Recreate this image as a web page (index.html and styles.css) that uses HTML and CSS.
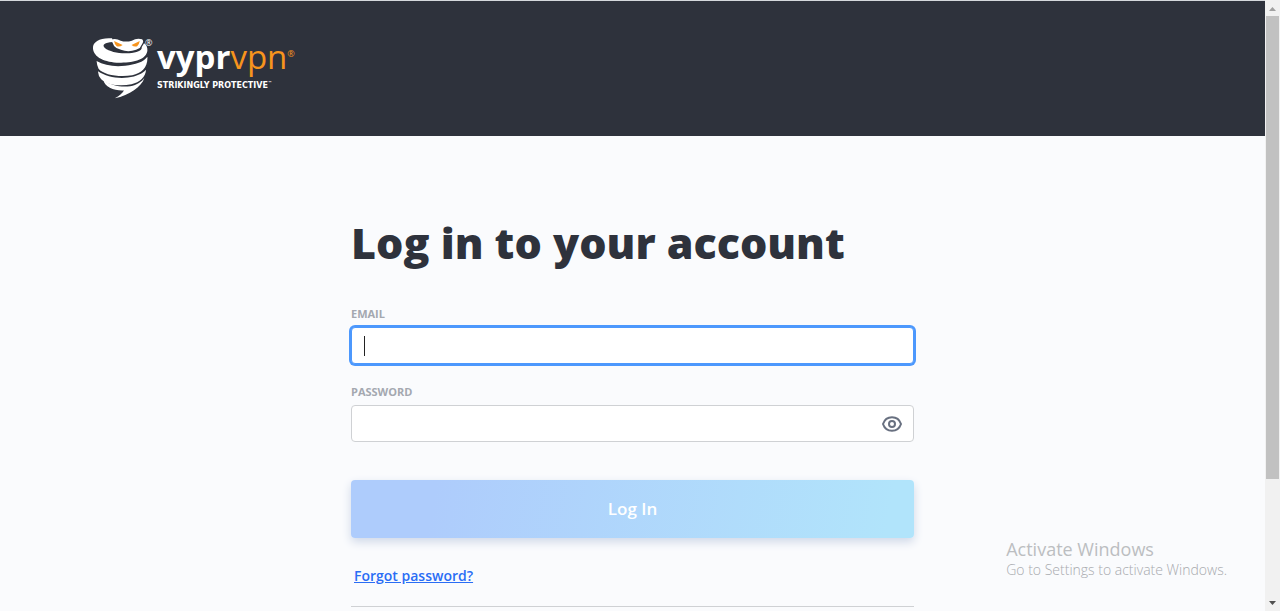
FILE: index.html
```html
<!DOCTYPE html>
<html lang="en">
<head>
<meta charset="utf-8">
<meta name="viewport" content="width=device-width, initial-scale=1">
<title>Log in - VyprVPN</title>
<link rel="stylesheet" href="styles.css">
</head>
<body>
<div class="screen">
  <div class="page">
    <header class="header">
      <a class="brand" href="#" aria-label="VyprVPN home">
        <svg class="brand-mark" viewBox="24 26 168 188" aria-hidden="true">
          <path fill="#fff" d="M84 30C50 27 25 39 26 60C28 88 62 103 106 104C150 105 188 94 191 68C192 58 188 49 181 45L174 56C176 67 158 73 136 75C108 78 76 70 62 59C52 50 62 42 86 41Z"/>
          <path fill="#fff" d="M80 34Q96 29 110 37Q126 43 144 37Q158 29 175 33Q181 38 176 46L168 59Q157 65 145 68Q127 71 111 65Q96 61 90 53Q86 43 80 34Z"/>
          <path fill="#f7941d" d="M90 38L116 50Q107 57 98 54Q92 50 90 38ZM168 38L143 50Q151 57 160 54Q166 49 168 38Z"/>
          <path fill="#fff" d="M37 99C60 112 91 117 124 113C154 110 180 102 191 86C193 117 175 136 145 142C104 149 57 140 43 122Q38 113 37 99Z"/>
          <path fill="#fff" d="M41 130C65 146 99 153 132 149C158 145 178 136 187 125C186 147 168 163 143 169C106 177 66 170 51 154Q42 145 41 130Z"/>
          <path fill="#fff" d="M58 157C81 173 112 179 139 175C160 171 174 161 182 150C172 178 138 201 92 212Q113 200 120 188C92 190 61 177 58 157Z"/>
        </svg>
        <span class="brand-reg">®</span>
        <span class="brand-text">
          <span class="brand-name">vypr<span class="brand-vpn">vpn</span><sup class="brand-mini">®</sup></span>
          <span class="brand-tag">STRIKINGLY PROTECTIVE<sup class="brand-tm">™</sup></span>
        </span>
      </a>
    </header>
    <main class="main">
      <h1 class="title">Log in to your account</h1>
      <form class="form">
        <label class="label" for="email">EMAIL</label>
        <div class="field">
          <input class="input input-active" id="email" type="email">
          <span class="caret"></span>
        </div>
        <label class="label" for="password">PASSWORD</label>
        <div class="field">
          <input class="input" id="password" type="password">
          <button class="reveal" type="button" aria-label="Show password">
            <svg class="reveal-icon" viewBox="0 0 20 16" aria-hidden="true" fill="none" stroke="#687080" stroke-width="2">
              <path d="M1 8C4 -1 16 -1 19 8C16 17 4 17 1 8Z"/>
              <circle cx="10" cy="8" r="3"/>
            </svg>
          </button>
        </div>
        <button class="submit" type="submit">Log In</button>
      </form>
      <a class="forgot" href="#">Forgot password?</a>
      <hr class="rule">
    </main>
  </div>
  <div class="scrollbar" aria-hidden="true">
    <svg class="arrow" viewBox="0 0 15 16"><path fill="#a0a0a0" d="M4 11L7.5 7L11 11Z"/></svg>
    <div class="track"><div class="thumb"></div></div>
    <svg class="arrow" viewBox="0 0 15 16"><path fill="#505050" d="M4 6H11L7.5 10Z"/></svg>
  </div>
  <aside class="notice">
    <p class="notice-title">Activate Windows</p>
    <p class="notice-text">Go to Settings to activate Windows.</p>
  </aside>
</div>
</body>
</html>
```
FILE: styles.css
```css
* {
  box-sizing: border-box;
}

body {
  margin: 0;
  font-family: "Open Sans", "Noto Sans", sans-serif;
  color: #2e323c;
  background: #fafbfd;
}

.screen {
  position: relative;
  display: flex;
  height: 100vh;
  overflow: hidden;
}

.page {
  flex: 1;
  min-width: 0;
}

.header {
  padding: 36px 92px 37px;
  border-top: 1px solid #d5d8dc;
  background: #2e323c;
}

.brand {
  display: inline-flex;
  align-items: flex-start;
  vertical-align: top;
  color: #fff;
  text-decoration: none;
}

.brand-mark {
  width: 56px;
  height: 62px;
}

.brand-reg {
  width: 9px;
  margin-left: -3px;
  font-size: 9px;
  line-height: 12px;
}

.brand-text {
  display: flex;
  flex-direction: column;
  padding-left: 3px;
}

.brand-name {
  font-size: 33px;
  font-weight: 700;
  line-height: 40px;
}

.brand-vpn {
  font-weight: 400;
  color: #f7941d;
}

.brand-mini {
  font-size: 9px;
  font-weight: 400;
  line-height: 8px;
  vertical-align: 12px;
  color: #f7941d;
}

.brand-tag {
  padding-top: 3px;
  font-family: "DejaVu Sans", sans-serif;
  font-size: 8px;
  font-weight: 700;
  line-height: 12px;
}

.brand-tm {
  font-size: 4px;
  line-height: 4px;
}

.main {
  width: 100%;
  max-width: 595px;
  margin: 0 auto;
  padding: 75px 16px 0;
}

.title {
  margin: 0;
  font-size: 43px;
  font-weight: 800;
  line-height: 64px;
  white-space: nowrap;
}

.form {
  display: flex;
  flex-direction: column;
  padding-top: 31px;
}

.label {
  font-size: 11px;
  font-weight: 700;
  line-height: 16px;
  color: #a4a8b0;
}

.field {
  position: relative;
  display: flex;
  margin: 5px 0 20px;
}

.input {
  width: 100%;
  height: 37px;
  padding: 0 12px;
  border: 1px solid #cfd1d4;
  border-radius: 4px;
  outline: 0;
  font: inherit;
  background: #fff;
}

.input-active {
  border-color: #4c98fd;
  box-shadow: 0 0 0 2px #4c98fd;
}

.caret {
  position: absolute;
  top: 9px;
  left: 13px;
  width: 1px;
  height: 20px;
  background: #222;
}

.reveal {
  position: absolute;
  top: 0;
  right: 12px;
  display: flex;
  align-items: center;
  height: 37px;
  padding: 0;
  border: 0;
  background: none;
}

.reveal-icon {
  width: 20px;
  height: 16px;
}

.submit {
  height: 58px;
  margin-top: 18px;
  padding: 0 0 2px;
  border: 0;
  border-radius: 4px;
  font-family: inherit;
  font-size: 17px;
  font-weight: 600;
  color: #fff;
  background: linear-gradient(100deg, #aeccfc 15%, #b1e4fb 95%);
  box-shadow: 0 4px 10px #cfd8e8;
}

.forgot {
  display: inline-block;
  margin: 28px 0 0 3px;
  font-size: 14px;
  font-weight: 600;
  line-height: 20px;
  color: #2a6df5;
}

.rule {
  margin: 20px 0 0;
  border: 0;
  border-top: 1px solid #cfd1d4;
}

.scrollbar {
  display: flex;
  flex-direction: column;
  width: 15px;
  background: #f1f1f1;
}

.arrow {
  width: 15px;
  height: 16px;
}

.track {
  flex: 1;
  padding: 0 1px;
}

.thumb {
  height: 80%;
  background: #c1c1c1;
}

.notice {
  position: absolute;
  right: 53px;
  bottom: 31px;
  color: #a8aaae;
}

.notice-title {
  margin: 0;
  font-size: 18px;
  line-height: 22px;
  color: #bcbec1;
}

.notice-text {
  margin: 0;
  font-size: 14px;
  font-weight: 300;
  line-height: 20px;
}
```
